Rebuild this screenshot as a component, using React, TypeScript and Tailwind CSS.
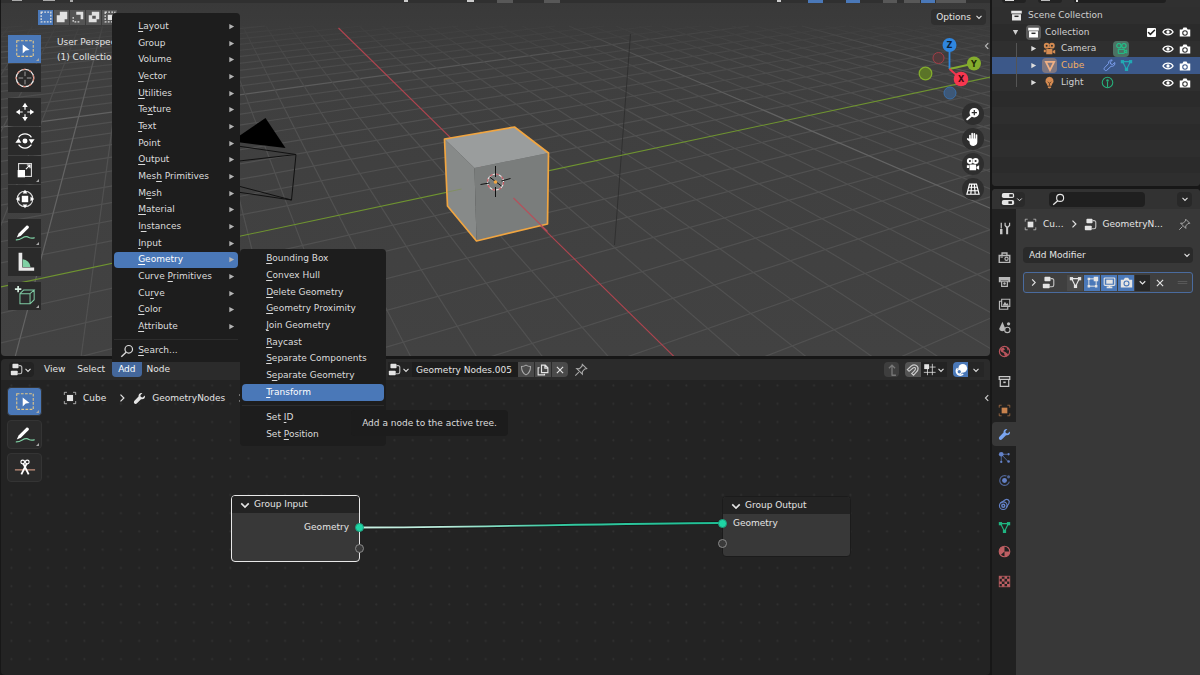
import { type ReactNode } from "react";
import { Check } from "lucide-react";

type IconProps = { children: ReactNode; className?: string };

function Icon({ children, className = "size-[14px]" }: IconProps) {
    return (
        <svg viewBox="0 0 16 16" fill="none" stroke="currentColor" strokeWidth="1.4" className={`shrink-0 ${className}`} aria-hidden="true">
            {children}
        </svg>
    );
}

const fill = { fill: "currentColor", stroke: "none" };

const glyphs = {
    down: <path d="M4 6.2l4 4 4-4" strokeWidth="1.7" />,
    right: <path d="M6 3.5L10.5 8 6 12.5" strokeWidth="1.6" />,
    left: <path d="M10 3.5L5.5 8l4.500 4.500" strokeWidth="1.8" />,
    triRight: <path d="M3 2l11 6-11 6z" {...fill} />,
    triDown: <path d="M2 2.500h12L8 13.500z" {...fill} />,
    close: <path d="M3 3l10 10M13 3L3 13" strokeWidth="1.800" />,
    search: <><circle cx="10" cy="6" r="4.300" /><path d="M7 9.500L1.500 14.500" strokeWidth="1.600" /></>,
    object: <><rect x="4.500" y="4.500" width="7" height="7" {...fill} /><path d="M1.500 4.500v-3h3M11.500 1.500h3v3M14.500 11.500v3h-3M4.500 14.500h-3v-3" strokeWidth="1.100" strokeOpacity="0.7" /></>,
    wrench: <path d="M14.600 4.300l-2.700 2.500-2.300-.5-.5-2.300 2.500-2.700C9 .5 6.500 2.300 6.800 5.600L1.500 11c-1.500 1.700.9 4.800 3.100 3.200L9.900 9c3.600.5 5.500-2 4.700-4.700z" {...fill} />,
    wrenchLine: <path d="M14.500 4.300l-2.700 2.400-2.300-.5-.5-2.300 2.400-2.600C9 .8 6.500 2.500 6.800 5.600l-5 5.200c-1.500 1.700.9 4.600 3 3L9.900 9c3.400.5 5.300-2 4.600-4.700z" strokeWidth="1.200" />,
    nodes: <><rect x="3" y="1" width="7.500" height="5.500" rx="1" {...fill} /><rect x="1" y="9.500" width="8.500" height="5.500" rx="1" {...fill} /><path d="M10.500 3.200h2a2 2 0 012 2v6a2 2 0 01-2 2h-3" strokeOpacity="0.8" /></>,
    mesh: <><path d="M3.200 3.200h9.600L8 12.800z" /><rect x="1" y="1.300" width="4" height="4" {...fill} /><rect x="11" y="1.300" width="4" height="4" {...fill} /><rect x="6" y="10.800" width="4" height="4" {...fill} /></>,
    editMode: <><path d="M4 3.500h6M3.500 4v7.500M4 12.500h8M12.500 6v6" strokeWidth="1.200" /><path d="M2 2h3v3H2zM9.500 1h5.500v5.500H9.500zM2 11h3v3H2zM11 11h3v3h-3z" {...fill} /></>,
    display: <><rect x="1.500" y="2.500" width="13" height="9" rx="1" /><rect x="4" y="4.500" width="8" height="5" {...fill} /><path d="M4.500 14h7M8 11.500V14" strokeWidth="2" /></>,
    still: <><path fillRule="evenodd" d="M1 4.500h3.500L6 2h4l1.500 2.500H15V14H1zM8 5.500a3.700 3.700 0 100 7.400 3.700 3.700 0 000-7.400z" {...fill} /><circle cx="8" cy="9.200" r="2.300" {...fill} /></>,
    eye: <><path d="M1.200 8C4 3 12 3 14.800 8 12 13 4 13 1.200 8z" strokeWidth="1.700" /><circle cx="8" cy="8" r="2.200" {...fill} /></>,
    collection: <><path d="M1.500 2h13v3.500h-13zM2.500 6.500h11V14h-11z" {...fill} /><path d="M5.500 9h5" stroke="#2b2b2b" strokeWidth="1.800" /></>,
    collectionLine: <><path d="M1.500 2h13v3.500h-13zM2.800 5.500h10.400V14H2.800z" strokeWidth="1.500" /><path d="M6.500 9h3" strokeWidth="2" /></>,
    film: <><path fillRule="evenodd" d="M4.500 1a3.500 3.500 0 100 7 3.500 3.500 0 000-7zm0 2.300a1.200 1.200 0 110 2.400 1.200 1.200 0 010-2.400zM11 1a3.500 3.500 0 100 7 3.500 3.500 0 000-7zm0 2.300a1.200 1.200 0 110 2.400 1.200 1.200 0 010-2.400z" {...fill} /><path d="M4 8.500h7.500V15H4zM12 11l3-1.500v5L12 13zM1 9.500h2.500v3H1z" {...fill} /></>,
    filmLine: <><circle cx="4.800" cy="4.500" r="2.700" /><circle cx="11" cy="4.500" r="2.700" /><path d="M4 9h7.500v5H4zM12 11l2.500-1v3.500L12 12.500z" strokeWidth="1.200" /></>,
    cone: <path d="M2.500 2.500h11L8 13.500z" strokeWidth="2.400" />,
    bulb: <><path d="M8 1a5 5 0 00-3.500 8.500L5.500 12h5l1-2.500A5 5 0 008 1zM6 13h4v1.500L8 15.500l-2-1z" {...fill} /><path d="M6 7l2 2 2-2M8 9v3" stroke="#4a3222" strokeWidth="1" /></>,
    lightData: <><circle cx="8" cy="8" r="6.500" strokeWidth="1.300" /><path d="M8 7v7" /><circle cx="8" cy="5.500" r="1.500" {...fill} /></>,
    properties: <><rect x="1" y="1.200" width="14" height="5.600" rx="2" {...fill} /><rect x="1" y="9.200" width="14" height="5.600" rx="2" {...fill} /><path d="M9.500 4h4M8.500 12h4" stroke="#222" strokeWidth="2.600" /></>,
    pin: <path d="M9.500 1.500l5 5-2.200.3-2.800 3 .1 3-6.500-6.500 3.200.2 2.800-2.900zM5.500 10.500L1.500 14.500" strokeWidth="1.200" />,
    tools: <><path d="M4 1v7" strokeWidth="1.500" /><path d="M2.500 8.500h3V15h-3zM8 1v3.500L10 7v8h2.500V7L15 4.500V1h-1.500v3L11.500 5.500 9.500 4V1z" {...fill} /></>,
    render: <><path d="M1.500 5.500h13V14h-13zM5 5V2.500h6V5" strokeWidth="1.700" /><circle cx="10.500" cy="9.500" r="2" /><path d="M3 7.500h3" /></>,
    output: <><path d="M1 2.500h14V9h-2.500V6.500h-9V9H1z" {...fill} /><path d="M4.500 7.500h7V14h-7z" strokeWidth="1.500" /><circle cx="8" cy="10.500" r="1.500" {...fill} /></>,
    layers: <><path d="M4.500 1.500h10v9h-10zM4 4H1.800v9.800H12V11" /><path d="M5.500 9.500l3-5 2 3 1-1.200 2 3.200z" {...fill} /></>,
    scene: <><path d="M5.500 1L1.500 9.500c0 4 7.500 4 7.500 0z" {...fill} /><circle cx="11.500" cy="11" r="3.300" fill="#212121" /><circle cx="13" cy="3.500" r="2" {...fill} /></>,
    world: <><circle cx="8" cy="8" r="6.300" /><path d="M2.500 4.500L7 3l1.500 2.500L6 7.500l3 1 3.500 3-2 2.500-2.500-1-.5-3-4-2zM10.500 2.500l3 2.500-1.500 2z" {...fill} /></>,
    particles: <><path d="M4 4h8M4 4l8 8.500M4 4v9" strokeWidth="1.200" strokeOpacity="0.7" /><circle cx="4" cy="4" r="2.900" {...fill} /><circle cx="13" cy="4" r="1.400" {...fill} /><circle cx="13" cy="13" r="1.600" {...fill} /><circle cx="4" cy="13.500" r="1.400" {...fill} /></>,
    physics: <><path d="M10.500 2.500a6 6 0 103.500 7" strokeOpacity="0.7" /><circle cx="8" cy="8" r="3" {...fill} /><circle cx="13" cy="3.500" r="1.900" {...fill} fillOpacity="0.7" /></>,
    constraint: <><path d="M3 6.500l6-4.300c2.500-1.500 6 1 4.500 4.300L10 12" strokeWidth="1.500" /><circle cx="6.500" cy="9.500" r="4.700" /><circle cx="6.500" cy="9.500" r="1.800" strokeWidth="1.800" /></>,
    material: <><circle cx="8" cy="8" r="6.500" /><path d="M8 1.500V8h6.500A6.500 6.500 0 018 14.500V8L3.500 3.500A6.500 6.500 0 018 1.500zM8 8L3 12.500A6.500 6.500 0 013.500 3.500z" {...fill} /></>,
    checker: <><rect x="1.500" y="1.500" width="13" height="13" strokeWidth="1" /><path d="M1.500 1.500h3.200v3.200H1.500zM8 1.500h3.200v3.200H8zM4.700 4.700H8V8H4.700zM11.200 4.700h3.300V8h-3.300zM1.500 8h3.200v3.200H1.500zM8 8h3.200v3.200H8zM4.700 11.200H8v3.300H4.700zM11.200 11.200h3.300v3.300h-3.300z" {...fill} /></>,
    shield: <path d="M8 1.500c2 1.500 4 1.800 6 1.800 0 5-1.500 9-6 11.200-4.500-2.200-6-6.200-6-11.200 2 0 4-.3 6-1.800z" />,
    copy: <><path d="M6 1.500h5l3.500 3.500v6.500H6zM10.500 2v3.500H14" strokeWidth="1.500" /><path d="M3.500 5H1.500v9.500H10V13" strokeWidth="1.500" /></>,
    parent: <path d="M8 14V3M4.500 6L8 2.500 11.500 6M7.500 14h5" strokeWidth="1.500" />,
    magnet: <path d="M1.500 7.500L6 3.500C10 .5 15 3.500 13.500 8c-.5 1.500-2.500 3.500-5 6L6.500 12c2-2 4-3.500 4.300-5 .3-1.800-1.300-2.500-2.800-1.300L3.500 9.500z" strokeWidth="1.300" />,
    snapGrid: <><path d="M5.500 7v8M11.500 1v14M8 5h7.500M1 11.500h14.500" strokeOpacity="0.8" strokeWidth="1.200" /><rect x="1.500" y="1.500" width="6" height="6" {...fill} /></>,
    overlay: <><circle cx="10" cy="6" r="5" {...fill} /><path d="M4 6a4.500 4.500 0 106.500 6.500" strokeWidth="1.800" /><circle cx="6" cy="10" r="2.500" fill="#4a78b8" strokeWidth="1.200" /></>,
    zoom: <><path fillRule="evenodd" d="M9.500 1a5.500 5.500 0 100 11 5.500 5.500 0 000-11zM8.800 3.500h1.400v2.300h2.300v1.400h-2.300v2.300H8.800V7.200H6.500V5.800h2.300z" {...fill} /><path d="M5.500 10.500L1.500 14" strokeWidth="2.400" strokeLinecap="round" /></>,
    hand: <path d="M4.500 9.500V4M7 8V1.800M9.500 8V2M12 8.500V3.500M5 10.500L2 8M12 7.500v4a3.500 3.500 0 01-7 0V8.500h6.500" strokeWidth="1.900" strokeLinecap="round" fill="currentColor" />,
    perspGrid: <path d="M4 2.500h8l3 11.500H1zM2.800 6h10.400M2 10h12M6.500 2.500L5.500 14M9.500 2.500l1 11.500" strokeWidth="1.300" />,
    grip: <path d="M1 6.500h14M1 9.500h14" strokeWidth="1" />,
};

type Glyph = keyof typeof glyphs;

function G({ name, className }: { name: Glyph; className?: string }) {
    return <Icon className={className}>{glyphs[name]}</Icon>;
}

/* ---------- tool drawings ---------- */

const toolArt = {
    select: (
        <>
            <rect x="3" y="3" width="18" height="17" fill="none" stroke="#e0c68a" strokeWidth="1.200" strokeDasharray="3 1.5" />
            <path d="M9.500 7l7.500 6-4.200.5-3.300 3.500z" fill="#fff" />
        </>
    ),
    cursor: (
        <>
            <circle cx="12" cy="12" r="9.500" fill="none" stroke="#eee" strokeWidth="1.400" />
            <circle cx="12" cy="12" r="9.500" fill="none" stroke="#d98c7c" strokeWidth="1.400" strokeDasharray="3 4" />
            <path d="M12 5v5M12 14v5M5 12h5M14 12h5" stroke="#aaa" strokeWidth="1" />
        </>
    ),
    move: (
        <>
            <path d="M12 2l3 4.500H9zM12 22l3-4.500H9zM2 12l4.500-3v6zM22 12l-4.500-3v6z" fill="#fff" />
            <path d="M12 6v3.500M12 14.500V18M6 12h3.500M14.500 12H18" stroke="#fff" strokeWidth="1.300" />
        </>
    ),
    rotate: (
        <>
            <path d="M5 8a8.500 8.500 0 0114 0M5 16a8.500 8.500 0 0014 0" fill="none" stroke="#fff" strokeWidth="1.300" />
            <circle cx="12" cy="12" r="2.700" fill="#fff" />
            <path d="M1.500 14l3.500-5 3 5zM16 10h6.500l-3.500 5z" fill="#fff" />
        </>
    ),
    scale: (
        <>
            <rect x="5" y="5" width="14" height="14" fill="none" stroke="#ddd" strokeWidth="1.200" />
            <rect x="4" y="12" width="8" height="8" fill="#fff" />
            <path d="M13 11l4.500-4.500M14 6.500h3.500V10" fill="none" stroke="#fff" strokeWidth="1.200" />
        </>
    ),
    transform: (
        <>
            <circle cx="12" cy="12" r="8.500" fill="none" stroke="#ddd" strokeWidth="1.200" />
            <rect x="8.500" y="8.500" width="7" height="7" fill="#fff" />
            <path d="M12 2l2.500 4h-5zM12 22l2.500-4h-5zM2 12l4-2.500v5zM22 12l-4-2.500v5z" fill="#fff" />
        </>
    ),
    annotate: (
        <>
            <path d="M2 19.500c6 .5 8-4.500 12-3.500 3 .8 4 3 8.500 1" fill="none" stroke="#7fd0a4" strokeWidth="1.300" />
            <path d="M13.500 4L5 12.500l-2 4.500 4.500-2L16 6.500c1-1.500-1-3.500-2.500-2.500z" fill="#fff" />
        </>
    ),
    measure: (
        <>
            <path d="M5 2h4v16h13v3.500H5z" fill="#e8e8e8" />
            <path d="M9.500 9a9 9 0 018.500 8.500H9.500z" fill="#7fd0a4" />
        </>
    ),
    addCube: (
        <>
            <path d="M6.500 9.500h11v11h-11zM6.500 9.500l4-4H22l-4.500 4M22 5.500V16l-4.500 4.500" fill="none" stroke="#7fcba4" strokeWidth="1.100" />
            <path d="M4.500 1v7M1 4.500h7" stroke="#d8f0e2" strokeWidth="1.800" />
        </>
    ),
    cut: (
        <>
            <path d="M1 14h22" stroke="#c4917c" strokeWidth="1.200" />
            <circle cx="9.500" cy="5.500" r="2" fill="none" stroke="#fff" strokeWidth="1.300" />
            <circle cx="14.500" cy="5.500" r="2" fill="none" stroke="#fff" strokeWidth="1.300" />
            <path d="M10 7l6 12M14 7L8 19" stroke="#fff" strokeWidth="2" />
        </>
    ),
};

type ToolName = keyof typeof toolArt;

function Tool({ name, label, active, corner, boxed }: { name: ToolName; label: string; active?: boolean; corner?: boolean; boxed?: boolean }) {
    const size = boxed ? "h-[29px] w-[35px] rounded-sm border border-[#343434]" : "h-7 w-[33px]";
    return (
        <button aria-label={label} className={`relative flex items-center justify-center ${size} ${active ? "bg-[#4a78b8]" : "bg-[#2a2a2a]"}`}>
            <svg viewBox="0 0 24 24" className="size-[22px]" aria-hidden="true">{toolArt[name]}</svg>
            {corner && (
                <svg viewBox="0 0 4 4" className="absolute right-[2px] bottom-[2px] size-[3px]" aria-hidden="true">
                    <path d="M4 0v4H0z" fill="#aaa" />
                </svg>
            )}
        </button>
    );
}

/* ---------- 3D viewport ---------- */

const ORIGIN = [495, 182];
const VPX = [150, -155];
const VPY = [2088, -155];
const TOP = 26;

function gridLine(n: number, step: number, from: number[], to: number[]) {
    const k = n * step;
    const x = (ORIGIN[0] + k * from[0]) / (1 + k);
    const y = (ORIGIN[1] + k * from[1]) / (1 + k);
    const slope = (x - to[0]) / (y - to[1]);
    return { x1: to[0] + slope * (TOP - to[1]), x2: to[0] + slope * (2000 - to[1]) };
}

function range(a: number, b: number) {
    return Array.from({ length: b - a + 1 }, (_, i) => a + i).filter((n) => n !== 0);
}

function Scene() {
    const lines = [
        ...range(-38, 18).map((n) => ({ n, ...gridLine(n, -0.0465, VPX, VPY) })),
        ...range(-28, 40).map((n) => ({ n, ...gridLine(n, 0.0224, VPY, VPX) })),
    ];
    return (
        <svg viewBox="0 0 990 356" preserveAspectRatio="xMidYMid slice" className="absolute inset-0 size-full rounded-b" aria-hidden="true">
            <defs>
                <linearGradient id="sky" x1="0" y1="0" x2="0" y2="1">
                    <stop offset="0" stopColor="#393939" />
                    <stop offset="0.2" stopColor="#3f3f3f" />
                    <stop offset="1" stopColor="#424242" />
                </linearGradient>
                <linearGradient id="fade" x1="0" y1="26" x2="0" y2="356" gradientUnits="userSpaceOnUse">
                    <stop offset="0" stopColor="#fff" stopOpacity="0.15" />
                    <stop offset="0.1" stopColor="#fff" stopOpacity="0.65" />
                    <stop offset="0.3" stopColor="#fff" />
                </linearGradient>
                <mask id="far" maskUnits="userSpaceOnUse" x="0" y="0" width="990" height="356">
                    <rect width="990" height="356" fill="url(#fade)" />
                </mask>
            </defs>
            <rect width="990" height="356" fill="url(#sky)" />
            <g mask="url(#far)" strokeWidth="1.2">
                {lines.map((l, i) => (
                    <line key={i} x1={l.x1} y1={TOP} x2={l.x2} y2="2000" stroke={l.n % 10 === 0 ? "#646464" : "#515151"} />
                ))}
            </g>
            <path d="M630 34L614 245" stroke="#2c2c2c" strokeWidth="0.8" />
            <path d="M338 28L674 357" stroke="#b0444f" strokeWidth="1.1" />
            <path d="M0 287L990 77" stroke="#6f9430" strokeWidth="1.1" />
            <path d="M265 118l20 30-45-5.500-8-2z" fill="#000" />
            <path d="M230 145l65.500 9.500L291 200l-61-16M230 162l65.500-7.500M230 191l61 9" fill="none" stroke="#111" strokeWidth="1" />
            <path d="M444 139l30 29 2 73-29-35z" fill="#878a89" />
            <path d="M474 168l74-15-1 71-71 17z" fill="#7a7d7c" />
            <path d="M444 139l70-12 34 26-74 15z" fill="#9a9d9d" />
            <path d="M444 139l70-12 34 26-1 71-71 17-29-35z" fill="none" stroke="#f0a541" strokeWidth="1.700" strokeLinejoin="round" />
            <path d="M513 198l34 33.500" stroke="#b5505a" strokeWidth="1.100" />
            <path d="M447 192l14-3" stroke="#809052" strokeWidth="0.700" />
            <circle cx="495" cy="182" r="8" fill="none" stroke="#eee" strokeWidth="1.200" />
            <circle cx="495" cy="182" r="8" fill="none" stroke="#c0545c" strokeWidth="1.200" strokeDasharray="3 3.300" />
            <path d="M495 166v11M495 187v10M480 184.500l9-1.500M501 181l9-2.500M489 177l12 9" stroke="#111" strokeWidth="1" />
            <circle cx="495" cy="182" r="1.800" fill="#f0a541" />
        </svg>
    );
}

function Gizmo() {
    return (
        <svg viewBox="0 0 70 68" className="h-[68px] w-[70px]" fontFamily="DejaVu Sans, sans-serif" fontSize="8" fontWeight="700" textAnchor="middle" aria-label="Orientation">
            <circle cx="34" cy="58" r="6" fill="#3d5878" stroke="#3a6ea8" />
            <circle cx="22.500" cy="23" r="5.500" fill="#513a3b" stroke="#a33c46" />
            <circle cx="9.500" cy="38.500" r="6.300" fill="#5b7428" stroke="#84ad2d" strokeWidth="1.300" />
            <path d="M33.500 34V10" stroke="#2f86df" strokeWidth="1.800" />
            <path d="M33.500 34L58 28.500" stroke="#84ad2d" strokeWidth="1.800" />
            <path d="M33.500 34L45 44" stroke="#f0364f" strokeWidth="1.800" />
            <circle cx="33.500" cy="10" r="7" fill="#2f86df" />
            <circle cx="58" cy="28.500" r="7" fill="#84ad2d" />
            <circle cx="45" cy="44" r="7.300" fill="#f7374f" />
            <text x="33.500" y="13" fill="#0b2136">Z</text>
            <text x="58" y="31.500" fill="#1f2b08">Y</text>
            <text x="45" y="47" fill="#3b0910">X</text>
        </svg>
    );
}

const selectModes = ["Set", "Extend", "Subtract", "Invert", "Intersect"];
const modeArt = [
    <rect x="2.500" y="2.500" width="11" height="11" strokeDasharray="2 1.500" strokeWidth="1.500" />,
    <path d="M5.500 2H14v8.500h-3V14H2V6h3.500z" {...fill} />,
    <><path d="M6 2h8v8.500h-3V5.500H6z" {...fill} /><path d="M9.500 13.500h-7v-7" strokeDasharray="2 1.500" /></>,
    <path fillRule="evenodd" d="M5.500 2H14v8.500h-3V14H2V6h3.500zM6 7v3h4V6.500H6z" {...fill} />,
    <><rect x="5.500" y="5.500" width="6" height="6" {...fill} /><rect x="2.500" y="2.500" width="11" height="11" strokeDasharray="2 1.500" /></>,
];

function Viewport() {
    return (
        <section aria-label="3D viewport" className="relative flex min-h-0 flex-[356] flex-col">
            <Scene />
            <div className="relative flex h-[3px] items-start justify-end gap-px bg-[#303030] pr-[24px]">
                <span className="ml-[11px] h-px w-[10px] bg-[#aaa]" />
                <span className="ml-5 h-px w-3 bg-[#aaa]" />
                <span className="mr-auto ml-[14px] h-[2px] w-[3px] bg-[#aaa]" />
                <span className="mr-[58px] h-[2px] w-[4px] bg-[#ccc]" />
                <span className="mr-[22px] h-[2px] w-[7px] bg-[#ccc]" />
                <span className="mr-[30px] h-[3px] w-4 bg-[#585858]" />
                <span className="mr-[216px] h-[3px] w-4 bg-[#585858]" />
                <span className="mr-[26px] h-[2px] w-[4px] bg-[#ccc]" />
                <span className="mr-[22px] h-[3px] w-[15px] bg-[#4a78b8]" />
                <span className="mr-[22px] h-[3px] w-[14px] bg-[#4a78b8]" />
                <span className="mr-[6px] h-[3px] w-[14px] bg-[#585858]" />
                <span className="h-[3px] w-4 bg-[#585858]" />
                <span className="h-[3px] w-[14px] bg-[#4a78b8]" />
                <span className="h-[3px] w-[30px] bg-[#585858]" />
            </div>
            <div className="relative flex items-center justify-between pt-[6px] pr-1 pl-[37px]">
                <div className="flex gap-px">
                    {selectModes.map((mode, i) => (
                        <button key={mode} aria-label={mode} className={`flex size-[15px] items-center justify-center text-[#e0e0e0] ${i === 0 ? "bg-[#4a78b8]" : "bg-[#545454]"}`}>
                            <Icon>{modeArt[i]}</Icon>
                        </button>
                    ))}
                </div>
                <button className="flex h-4 items-center gap-[3px] rounded-sm bg-[#2f2f2f] pr-[2px] pl-[5px]">
                    Options <G name="down" className="size-[10px]" />
                </button>
            </div>
            <div className="relative flex grow justify-between pt-[10px] pl-[7px]">
                <div className="flex gap-4">
                    <div className="flex flex-col gap-[6px]">
                        <div className="flex flex-col gap-px">
                            <Tool name="select" label="Select box" active corner />
                            <Tool name="cursor" label="Cursor" />
                        </div>
                        <div className="flex flex-col gap-px">
                            <Tool name="move" label="Move" />
                            <Tool name="rotate" label="Rotate" />
                            <Tool name="scale" label="Scale" corner />
                            <Tool name="transform" label="Transform" />
                        </div>
                        <div className="flex flex-col gap-px">
                            <Tool name="annotate" label="Annotate" corner />
                            <Tool name="measure" label="Measure" />
                        </div>
                        <Tool name="addCube" label="Add cube" corner />
                    </div>
                    <div className="leading-[15px]">
                        <p>User Perspective</p>
                        <p>(1) Collection</p>
                    </div>
                </div>
                <div className="relative flex items-start pr-1">
                    <div className="flex flex-col items-end">
                        <Gizmo />
                        <div className="flex flex-col gap-[3px] pr-[2px]">
                            {(["zoom", "hand", "film", "perspGrid"] as Glyph[]).map((name) => (
                                <button key={name} aria-label={name} className="flex size-[22px] items-center justify-center rounded-full bg-[#2e2e2e] text-white">
                                    <G name={name} className="size-[14px]" />
                                </button>
                            ))}
                        </div>
                    </div>
                    <button aria-label="Show sidebar" className="absolute top-[6px] -right-[2px] text-[#bbb]"><G name="left" className="size-[10px]" /></button>
                </div>
            </div>
        </section>
    );
}

/* ---------- menus ---------- */

type Entry = [label: string, key: number];

const addMenu: Entry[] = [
    ["Layout", 0], ["Group", -1], ["Volume", -1], ["Vector", 0], ["Utilities", 0], ["Texture", 2], ["Text", 0],
    ["Point", -1], ["Output", 0], ["Mesh Primitives", 3], ["Mesh", 1], ["Material", 0], ["Instances", 1],
    ["Input", 0], ["Geometry", 0], ["Curve Primitives", 6], ["Curve", 2], ["Color", 0], ["Attribute", 0],
];

const geometryMenu: Entry[] = [
    ["Bounding Box", 0], ["Convex Hull", 0], ["Delete Geometry", 0], ["Geometry Proximity", 0], ["Join Geometry", 0],
    ["Raycast", 0], ["Separate Components", 0], ["Separate Geometry", 1], ["Transform", 0],
];

function Label({ entry: [text, key] }: { entry: Entry }) {
    if (key < 0) return <span>{text}</span>;
    return (
        <span className="whitespace-pre">
            {text.slice(0, key)}
            <u className="underline-offset-2">{text[key]}</u>
            {text.slice(key + 1)}
        </span>
    );
}

function MenuItem({ entry, active, sub }: { entry: Entry; active?: boolean; sub?: boolean }) {
    return (
        <button role="menuitem" className={`flex h-full w-full items-center justify-between rounded-sm pr-[3px] pl-6 ${active ? "bg-[#4a78b8] text-white" : ""}`}>
            <Label entry={entry} />
            {sub && <G name="triRight" className="size-[7px] text-[#b5b5b5]" />}
        </button>
    );
}

function GeometryMenu() {
    return (
        <div role="menu" className="absolute -top-[3px] left-full ml-[2px] w-[146px] rounded-sm bg-[#1d1d1d] px-[2px] pt-[2px] pb-[3px]">
            <ul className="grid h-[150px] auto-rows-fr">
                {geometryMenu.map((e) => (
                    <li key={e[0]} className="relative">
                        <MenuItem entry={e} active={e[0] === "Transform"} />
                        {e[0] === "Transform" && (
                            <div role="tooltip" className="absolute top-full left-[109px] z-10 mt-[9px] rounded-sm bg-[#1c1c1c] px-[11px] py-[7px] leading-[12px] whitespace-nowrap">
                                Add a node to the active tree.
                            </div>
                        )}
                    </li>
                ))}
            </ul>
            <hr className="my-1 border-[#2c2c2c]" />
            <div className="grid h-[33px] auto-rows-fr">
                <MenuItem entry={["Set ID", 4]} />
                <MenuItem entry={["Set Position", 4]} />
            </div>
        </div>
    );
}

function AddMenu() {
    return (
        <div role="menu" className="absolute bottom-full left-0 z-20 w-[128px] rounded-t-sm bg-[#1d1d1d] px-[2px] pt-[5px] pb-[3px] text-[#dcdcdc]">
            <ul className="grid h-[317px] auto-rows-fr">
                {addMenu.map((e) => (
                    <li key={e[0]} className="relative">
                        <MenuItem entry={e} active={e[0] === "Geometry"} sub />
                        {e[0] === "Geometry" && <GeometryMenu />}
                    </li>
                ))}
            </ul>
            <hr className="mt-1 mb-[2px] border-[#2c2c2c]" />
            <button role="menuitem" className="flex h-[17px] w-full items-center gap-1 pl-[6px]">
                <G name="search" className="size-[14px]" />
                <Label entry={["Search...", 0]} />
            </button>
        </div>
    );
}

/* ---------- node editor ---------- */

function Socket({ linked }: { linked?: boolean }) {
    return <span className={`size-[9px] rounded-full border ${linked ? "border-[#1c9c7c] bg-[#1fd6a5]" : "border-[#8a8a8a] bg-[#3a3a3a]"}`} />;
}

function NodeTitle({ children }: { children: string }) {
    return (
        <h3 className="flex h-[17px] items-center gap-[3px] bg-[#232323] pl-[7px]">
            <G name="down" className="size-3 scale-125" />
            {children}
        </h3>
    );
}

function NodeCanvas() {
    return (
        <div className="relative grow overflow-hidden rounded-b bg-[#232323]">
            <svg className="absolute inset-0 size-full" aria-hidden="true">
                <defs>
                    <pattern id="dots" x="1.500" y="-3.500" width="18.24" height="18.24" patternUnits="userSpaceOnUse">
                        <circle cx="9" cy="9" r="1" fill="#303030" />
                    </pattern>
                    <linearGradient id="link" x1="358" x2="722" y1="0" y2="0" gradientUnits="userSpaceOnUse">
                        <stop offset="0" stopColor="#c9f0e3" />
                        <stop offset="0.250" stopColor="#b6ead9" />
                        <stop offset="0.550" stopColor="#34c9a0" />
                        <stop offset="1" stopColor="#1fbf95" />
                    </linearGradient>
                </defs>
                <rect width="100%" height="100%" fill="url(#dots)" />
                <path d="M358 147.500C470 147.500 600 143.500 722 143" fill="none" stroke="#161616" strokeWidth="3.500" />
                <path d="M358 147.500C470 147.500 600 143.500 722 143" fill="none" stroke="url(#link)" strokeWidth="1.800" />
            </svg>
            <div className="relative flex justify-between pt-[7px] pl-[6px]">
                <div className="flex gap-5">
                    <div className="flex flex-col gap-1">
                        <Tool name="select" label="Select box" active corner boxed />
                        <Tool name="annotate" label="Annotate" corner boxed />
                        <Tool name="cut" label="Cut links" boxed />
                    </div>
                    <nav className="flex h-[22px] items-center gap-[6px]">
                        <G name="object" className="ml-px size-[14px]" />
                        <span>Cube</span>
                        <G name="right" className="ml-1 size-3" />
                        <G name="wrench" className="-ml-px size-[13px]" />
                        <span>GeometryNodes</span>
                        <G name="right" className="ml-1 size-3" />
                    </nav>
                </div>
                <button aria-label="Show sidebar" className="-mr-[2px] mt-[6px] h-[10px] text-[#ccc]"><G name="left" className="size-[10px]" /></button>
            </div>
            <article className="absolute top-[115px] left-[230px] h-[67px] w-[129px] rounded-[4px] border border-[#e8e8e8] bg-[#383838]">
                <div className="overflow-hidden rounded-t-[3px]"><NodeTitle>Group Input</NodeTitle></div>
                <div className="mt-[6px] -mr-[5px] flex items-center justify-end gap-[6px] leading-[17px]">
                    Geometry <Socket linked />
                </div>
                <div className="mt-2 -mr-[5px] flex justify-end"><Socket /></div>
            </article>
            <article className="absolute top-[116px] left-[721px] h-[61px] w-[129px] rounded-[4px] border border-[#1b1b1b] bg-[#383838]">
                <div className="overflow-hidden rounded-t-[3px]"><NodeTitle>Group Output</NodeTitle></div>
                <div className="-ml-[5px] flex items-center gap-[6px] leading-[18px]">
                    <Socket linked /> Geometry
                </div>
                <div className="mt-[7px] -ml-[5px] flex"><Socket /></div>
            </article>
        </div>
    );
}

function NodeEditor() {
    return (
        <section aria-label="Node editor" className="flex min-h-0 flex-[316] flex-col">
            <header className="flex h-[21px] shrink-0 items-center rounded-t bg-[#2b2b2b] pr-[6px] pl-2">
                <button aria-label="Editor type" className="flex h-[15px] items-center rounded-sm bg-[#232323] px-px">
                    <G name="nodes" className="size-[13px]" /><G name="down" className="size-[10px]" />
                </button>
                <button className="ml-[10px]">View</button>
                <button className="ml-3">Select</button>
                <div className="relative ml-[7px]">
                    <button className="block h-[15px] rounded-b-sm bg-[#44679b] px-[6px] text-white">Add</button>
                    <AddMenu />
                </div>
                <button className="ml-[5px]">Node</button>
                <div className="ml-[218px] flex h-[15px] items-center">
                    <button aria-label="Browse node tree" className="flex h-full items-center bg-[#232323] pr-px">
                        <G name="nodes" className="size-[13px]" /><G name="down" className="size-[10px]" />
                    </button>
                    <input aria-label="Node tree name" defaultValue="Geometry Nodes.005" className="h-full w-[106px] bg-[#1d1d1d] px-1 outline-none" />
                    <div className="flex h-full items-center gap-px">
                        <button aria-label="Fake user" className="flex h-full w-4 items-center justify-center bg-[#4a4a4a] text-[#aaa]"><G name="shield" className="size-3" /></button>
                        <button aria-label="Duplicate" className="flex h-full w-4 items-center justify-center bg-[#4a4a4a]"><G name="copy" className="size-3" /></button>
                        <button aria-label="Unlink" className="flex h-full w-4 items-center justify-center rounded-r-sm bg-[#4a4a4a]"><G name="close" className="size-[10px]" /></button>
                    </div>
                    <button aria-label="Pin" className="ml-[6px] text-[#aaa]"><G name="pin" className="size-[14px]" /></button>
                </div>
                <div className="ml-auto flex h-[15px] gap-[6px]">
                    <button aria-label="Parent tree" className="flex w-[15px] items-center justify-center rounded-sm bg-[#3e3e3e] text-[#777]"><G name="parent" /></button>
                    <div className="flex">
                        <button aria-label="Snap" className="flex w-4 items-center justify-center rounded-l-sm bg-[#545454] text-[#ccc]"><G name="magnet" /></button>
                        <button aria-label="Snap to" className="flex w-[26px] items-center justify-center bg-[#232323]">
                            <G name="snapGrid" className="size-[13px]" /><G name="down" className="size-[10px]" />
                        </button>
                    </div>
                    <div className="flex">
                        <button aria-label="Overlays" className="flex w-[15px] items-center justify-center rounded-l-sm bg-[#4a78b8] text-white"><G name="overlay" /></button>
                        <button aria-label="Overlay options" className="flex w-4 items-center justify-center bg-[#262626]"><G name="down" className="size-[10px]" /></button>
                    </div>
                </div>
            </header>
            <NodeCanvas />
        </section>
    );
}

/* ---------- outliner ---------- */

function Visibility({ name }: { name: string }) {
    return (
        <span className="ml-[4px] flex gap-[5px]">
            <button aria-label={`Hide ${name}`}><G name="eye" className="size-3" /></button>
            <button aria-label={`Disable ${name} in renders`}><G name="still" className="size-3" /></button>
        </span>
    );
}

function Outliner() {
    return (
        <section aria-label="Outliner" className="flex h-[186px] shrink-0 flex-col rounded-b bg-[#2b2b2b]">
            <div className="flex h-[7px] items-start gap-3 bg-[#303030] pl-[10px]">
                <span className="flex h-[3px] w-6 gap-1 rounded-b-sm bg-[#222] pl-[3px]"><i className="h-px w-[9px] bg-[#ddd]" /></span>
                <span className="h-[3px] w-6 rounded-b-sm bg-[#222] pl-[3px]"><i className="block h-px w-[9px] bg-[#bbb]" /></span>
                <span className="h-[3px] w-[92px] rounded-b-sm bg-[#1f1f1f] pl-[2px]"><i className="block h-[2px] w-[2px] bg-[#ddd]" /></span>
            </div>
            <ul className="relative grid h-[84px] auto-rows-fr text-[#d0d0d0]">
                <li className="flex items-center gap-[5px] bg-[#2f2f2f] pl-[18px]">
                    <G name="collection" className="size-[13px] text-[#e8e8e8]" /> Scene Collection
                </li>
                <li className="flex items-center pr-[9px] pl-5">
                    <G name="triDown" className="size-[7px]" />
                    <span className="ml-[7px] flex size-[15px] items-center justify-center rounded-sm bg-[#5a5a5a] text-white">
                        <G name="collection" className="size-[13px]" />
                    </span>
                    <span className="ml-[4px]">Collection</span>
                    <label className="relative ml-auto size-[9px]">
                        <input type="checkbox" defaultChecked aria-label="Exclude from view layer" className="block size-[9px] appearance-none rounded-[1px] bg-white" />
                        <Check className="pointer-events-none absolute inset-0 size-[9px] text-[#222]" strokeWidth={4} />
                    </label>
                    <span className="ml-[2px] text-white"><Visibility name="Collection" /></span>
                </li>
                <li className="flex items-center bg-[#2f2f2f] pr-[9px] pl-[38px]">
                    <G name="triRight" className="size-[7px] text-[#ddd]" />
                    <G name="film" className="ml-[6px] size-[13px] text-[#d58b51]" />
                    <span className="ml-[5px]">Camera</span>
                    <span className="ml-[17px] flex size-4 items-center justify-center rounded-[4px] bg-[#4c7264] text-[#1fc58a]">
                        <G name="filmLine" className="size-[13px]" />
                    </span>
                    <span className="ml-auto text-white"><Visibility name="Camera" /></span>
                </li>
                <li className="flex items-center bg-[#3c5889] pr-[9px] pl-[38px]">
                    <G name="triRight" className="size-[7px] text-[#ddd]" />
                    <span className="ml-[5px] flex size-[15px] items-center justify-center rounded-sm bg-[#7d7680] text-[#f0b084]">
                        <G name="cone" className="size-3" />
                    </span>
                    <span className="ml-1 text-[#f0ae62]">Cube</span>
                    <G name="wrenchLine" className="ml-[19px] size-[13px] text-[#7c9ff0]" />
                    <G name="mesh" className="ml-1 size-[13px] text-[#22a9b4]" />
                    <span className="ml-auto text-white"><Visibility name="Cube" /></span>
                </li>
                <li className="flex items-center bg-[#2f2f2f] pr-[9px] pl-[38px]">
                    <G name="triRight" className="size-[7px] text-[#ddd]" />
                    <G name="bulb" className="ml-[6px] size-[13px] text-[#d58b51]" />
                    <span className="ml-[5px]">Light</span>
                    <G name="lightData" className="ml-[18px] size-[13px] text-[#27b07c]" />
                    <span className="ml-auto text-white"><Visibility name="Light" /></span>
                </li>
                <li aria-hidden="true" className="absolute top-9 bottom-1 left-6 w-px bg-[#555]" />
            </ul>
            <div className="grow rounded-b bg-[repeating-linear-gradient(#2b2b2b_0_16px,#2e2e2e_16px_33px)]" />
        </section>
    );
}

/* ---------- properties ---------- */

const tabGroups: { box: string; tabs: [Glyph, string][] }[] = [
    { box: "h-6", tabs: [["tools", "text-[#c8c8c8]"]] },
    { box: "h-[117px]", tabs: [["render", "text-[#b8b8b8]"], ["output", "text-[#b8b8b8]"], ["layers", "text-[#b8b8b8]"], ["scene", "text-[#b8b8b8]"], ["world", "text-[#b9545c]"]] },
    { box: "h-6", tabs: [["collectionLine", "text-[#c8c8c8]"]] },
    {
        box: "h-[164px]",
        tabs: [["object", "text-[#c9834e]"], ["wrench", "text-[#7aa5f0]"], ["particles", "text-[#6482c8]"], ["physics", "text-[#6482c8]"], ["constraint", "text-[#6482c8]"], ["mesh", "text-[#20b581]"], ["material", "text-[#bd5f63]"]],
    },
    { box: "h-6", tabs: [["checker", "text-[#bd5f63]"]] },
];

function Properties() {
    return (
        <section aria-label="Properties" className="flex min-h-0 grow flex-col overflow-hidden rounded-t bg-[#383838]">
            <header className="flex h-5 shrink-0 items-center bg-[#323232] pr-2 pl-2">
                <button aria-label="Editor type" className="flex h-[15px] items-center rounded-sm bg-[#2a2a2a] px-px">
                    <G name="properties" className="size-[14px]" /><G name="down" className="size-[9px]" />
                </button>
                <label className="ml-auto flex h-[15px] w-24 items-center rounded-sm bg-[#1f1f1f] pl-[3px]">
                    <G name="search" className="size-[13px]" />
                    <input aria-label="Search properties" className="w-full min-w-0 bg-transparent outline-none" />
                </label>
                <button aria-label="Options" className="ml-8 flex h-[15px] w-[15px] items-center justify-center rounded-sm bg-[#282828]"><G name="down" className="size-[10px]" /></button>
            </header>
            <div className="flex grow">
                <nav className="flex w-6 shrink-0 flex-col gap-[6px] bg-[#212121] pt-[7px]">
                    {tabGroups.map((group, i) => (
                        <div key={i} className={`grid auto-rows-fr ${group.box}`}>
                            {group.tabs.map(([name, color]) => (
                                <button key={name} aria-label={name} className={`flex items-center justify-center rounded-l-sm ${color} ${name === "wrench" ? "bg-[#383838]" : ""}`}>
                                    <G name={name} className="size-[13px]" />
                                </button>
                            ))}
                        </div>
                    ))}
                </nav>
                <div className="flex min-w-0 grow flex-col pr-[7px] pl-[7px]">
                    <div className="mt-[7px] flex h-4 items-center pl-px">
                        <G name="object" className="size-[13px]" />
                        <span className="ml-[6px]">Cu...</span>
                        <G name="right" className="mx-[4px] size-3" />
                        <G name="nodes" className="size-[13px]" />
                        <span className="ml-[6px]">GeometryN...</span>
                        <button aria-label="Pin" className="ml-auto pr-[2px] text-[#aaa]"><G name="pin" className="size-[13px]" /></button>
                    </div>
                    <div className="relative mt-[15px]">
                        <select aria-label="Add Modifier" className="block h-4 w-full appearance-none rounded-sm bg-[#2a2a2a] pl-[6px]">
                            <option>Add Modifier</option>
                        </select>
                        <span className="pointer-events-none absolute top-[3px] right-px"><G name="down" className="size-[10px]" /></span>
                    </div>
                    <div className="mt-[9px] flex h-[21px] items-center rounded-[3px] border border-[#4a6b9e] bg-[#3f3f3f] pr-1 pl-1">
                        <button aria-label="Expand"><G name="right" className="size-[11px]" /></button>
                        <G name="nodes" className="ml-[3px] size-[13px]" />
                        <div className="ml-auto flex h-4 gap-px">
                            <button aria-label="On cage" className="flex w-4 items-center justify-center bg-[#4a4a4a]"><G name="mesh" className="size-[13px]" /></button>
                            <button aria-label="Edit mode" className="flex w-4 items-center justify-center bg-[#4a78b8]"><G name="editMode" className="size-[13px]" /></button>
                            <button aria-label="Realtime" className="flex w-4 items-center justify-center bg-[#4a78b8]"><G name="display" className="size-[13px]" /></button>
                            <button aria-label="Render" className="flex w-4 items-center justify-center bg-[#4a78b8]"><G name="still" className="size-[13px]" /></button>
                            <button aria-label="More" className="flex w-[15px] items-center justify-center bg-[#282828]"><G name="down" className="size-[11px]" /></button>
                        </div>
                        <button aria-label="Remove" className="ml-[5px]"><G name="close" className="size-[10px]" /></button>
                        <G name="grip" className="ml-[12px] size-[11px] text-[#666]" />
                    </div>
                </div>
            </div>
        </section>
    );
}

export default function App() {
    return (
        <div className="flex h-screen gap-[2px] overflow-hidden bg-[#171717] pl-px font-['DejaVu_Sans',sans-serif] text-[9px] leading-[15px] text-[#e4e4e4]">
            <main className="flex min-w-0 grow flex-col gap-[3px]">
                <Viewport />
                <NodeEditor />
            </main>
            <aside className="flex w-[208px] shrink-0 flex-col gap-[3px]">
                <Outliner />
                <Properties />
            </aside>
        </div>
    );
}
